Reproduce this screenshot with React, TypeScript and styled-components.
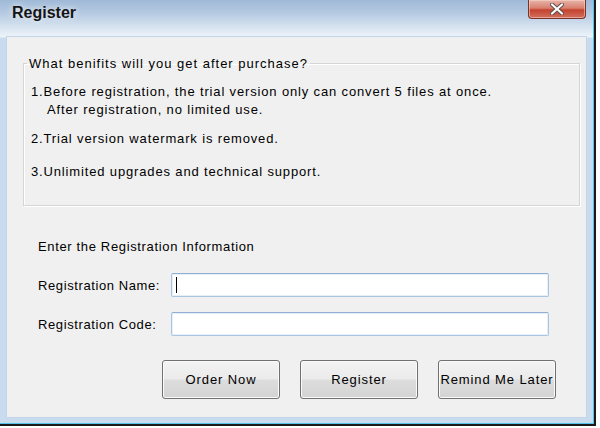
import React from "react";
import styled, { createGlobalStyle } from "styled-components";

const Global = createGlobalStyle`
  html, body { margin: 0; padding: 0; background: #ffffff; }
  body { font-family: "Liberation Sans", Arial, sans-serif; }
`;

const Page = styled.div`
  width: 600px;
  height: 428px;
  background: #ffffff;
  overflow: hidden;
`;

const Window = styled.div`
  box-sizing: border-box;
  width: 596px;
  height: 426px;
  display: flex;
  flex-direction: column;
  padding: 0 8px 7px 7px;
  border-right: 2px solid #1a1a1a;
  border-bottom: 2px solid #1a1a1a;
  box-shadow: inset -1px -1px 0 #4fc3e8;
  background: linear-gradient(
    to bottom,
    #9fb9d7 0px,
    #b7cbe2 14px,
    #dde8f3 30px,
    #eef3f9 37px,
    #c8dbef 38px,
    #c8dbef 100%
  );
`;

const TitleBar = styled.div`
  height: 37px;
  flex: none;
  display: flex;
  align-items: flex-start;
  margin: 0 -8px 0 -7px;
  padding-left: 12px;
  padding-right: 8px;
`;

const Title = styled.div`
  font-family: "Liberation Sans", Arial, sans-serif;
  font-weight: bold;
  font-size: 16px;
  line-height: 18px;
  margin-top: 4px;
  color: #151515;
  text-shadow: 0 0 6px rgba(255, 255, 255, 0.9);
`;

const CloseButton = styled.div`
  margin-left: auto;
  width: 58px;
  height: 19px;
  box-sizing: border-box;
  border: 1px solid #7a3328;
  border-top: none;
  border-radius: 0 0 4px 4px;
  background: linear-gradient(
    to bottom,
    #e6b5aa 0%,
    #d9806f 45%,
    #c4432f 55%,
    #d0705d 100%
  );
  box-shadow: inset 0 0 0 1px rgba(255, 220, 210, 0.5);
  display: flex;
  align-items: center;
  justify-content: center;
`;

const Client = styled.div`
  flex: 1;
  background: #f0f0f0;
  display: flex;
  flex-direction: column;
  padding: 19px 6px 0 16px;
  box-shadow: 0 0 0 1px #c3d5e8;
`;

const Group = styled.fieldset`
  margin: 0;
  padding: 0 0 24px 7px;
  border: 1px solid #d5d5d5;
  box-shadow: inset 1px 1px 0 #ffffff, 1px 1px 0 #ffffff;
  min-inline-size: 0;
`;

const Legend = styled.legend`
  font-size: 13px;
  line-height: 15px;
  letter-spacing: 1px;
  padding: 0 2px;
  margin-left: -4px;
  color: #000;
`;

const Items = styled.div`
  padding-top: 12px;
  display: flex;
  flex-direction: column;
`;

const Item = styled.div<{ $top: number }>`
  margin-top: ${(p) => p.$top}px;
  font-size: 13px;
  line-height: 18px;
  letter-spacing: 0.85px;
  color: #000;
`;

const Indent = styled.div`
  padding-left: 16px;
`;

const Form = styled.div`
  margin-top: 33px;
  padding-left: 15px;
  display: flex;
  flex-direction: column;
`;

const Heading = styled.div`
  font-size: 13px;
  line-height: 15px;
  letter-spacing: 0.65px;
  color: #000;
`;

const Row = styled.div<{ $top: number }>`
  margin-top: ${(p) => p.$top}px;
  display: grid;
  grid-template-columns: 133px 378px;
  align-items: center;
  height: 24px;
`;

const Label = styled.div`
  font-size: 13px;
  line-height: 15px;
  letter-spacing: 0.6px;
  color: #000;
`;

const TextBox = styled.div`
  box-sizing: border-box;
  height: 24px;
  background: #ffffff;
  border: 1px solid #a9c5e2;
  border-top-color: #8fb0d3;
  border-radius: 2px;
  box-shadow: inset 0 0 0 1px #e6eef7;
  display: flex;
  align-items: center;
  padding-left: 4px;
`;

const Caret = styled.span`
  width: 1px;
  height: 16px;
  background: #000;
`;

const Buttons = styled.div`
  margin-top: 24px;
  padding-left: 124px;
  display: flex;
  gap: 20px;
`;

const Button = styled.button`
  box-sizing: border-box;
  width: 118px;
  height: 39px;
  border: 1px solid #707070;
  border-radius: 3px;
  background: linear-gradient(
    to bottom,
    #f3f3f3 0%,
    #ebebeb 48%,
    #dddddd 52%,
    #d3d3d3 100%
  );
  box-shadow: inset 0 0 0 1px #fbfbfb;
  font-family: "Liberation Sans", Arial, sans-serif;
  font-size: 13px;
  letter-spacing: 0.9px;
  color: #000;
  padding: 0;
  white-space: nowrap;
`;

export default function App() {
  return (
    <Page>
      <Global />
      <Window>
        <TitleBar>
          <Title>Register</Title>
          <CloseButton>
            <svg width="16" height="12" viewBox="0 0 16 12">
              <path
                d="M3 1.5 L13 10.5 M13 1.5 L3 10.5"
                stroke="#5a4a48"
                strokeWidth="4"
                strokeLinecap="round"
              />
              <path
                d="M3 1.5 L13 10.5 M13 1.5 L3 10.5"
                stroke="#ffffff"
                strokeWidth="2.2"
                strokeLinecap="round"
              />
            </svg>
          </CloseButton>
        </TitleBar>
        <Client>
          <Group>
            <Legend>What benifits will you get after purchase?</Legend>
            <Items>
              <Item $top={0}>
                1.Before registration, the trial version only can convert 5 files at once.
                <Indent>After registration, no limited use.</Indent>
              </Item>
              <Item $top={11}>2.Trial version watermark is removed.</Item>
              <Item $top={15}>3.Unlimited upgrades and technical support.</Item>
            </Items>
          </Group>
          <Form>
            <Heading>Enter the Registration Information</Heading>
            <Row $top={19}>
              <Label>Registration Name:</Label>
              <TextBox>
                <Caret />
              </TextBox>
            </Row>
            <Row $top={15}>
              <Label>Registration Code:</Label>
              <TextBox />
            </Row>
            <Buttons>
              <Button>Order Now</Button>
              <Button>Register</Button>
              <Button>Remind Me Later</Button>
            </Buttons>
          </Form>
        </Client>
      </Window>
    </Page>
  );
}
